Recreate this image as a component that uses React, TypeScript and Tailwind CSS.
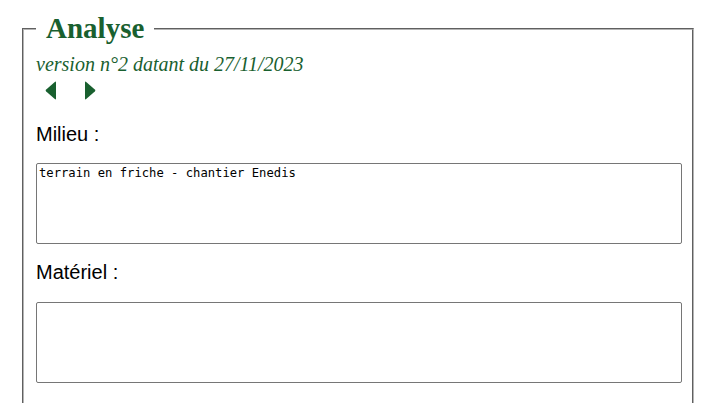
export default function App() {
  return (
    <div className="min-h-screen bg-white pl-[22px] pr-[26px] pt-[12px]">
      <fieldset className="h-[420px] border-2 border-[#b4b4b4] pl-[12px] pr-[10px] pb-[10px] [border-style:groove]">
        <legend className="px-[10px] font-['Liberation_Serif',serif] text-[29px] font-bold leading-[33px] text-[#19602f]">
          Analyse
        </legend>

        <div className="mt-[7px] font-['Liberation_Serif',serif] text-[20px] italic leading-[24px] text-[#19602f]">
          version n°2 datant du 27/11/2023
        </div>

        <div className="mt-[5px] flex items-center gap-[27px] pl-[9px]">
          <svg width="12" height="19" viewBox="0 0 12 19">
            <path d="M11 1.5 L11 17.5 Q11 19 9.8 18 L1.2 10.6 Q0 9.5 1.2 8.4 L9.8 1 Q11 0 11 1.5 Z" fill="#19602f" />
          </svg>
          <svg width="12" height="19" viewBox="0 0 12 19">
            <path d="M1 1.5 L1 17.5 Q1 19 2.2 18 L10.8 10.6 Q12 9.5 10.8 8.4 L2.2 1 Q1 0 1 1.5 Z" fill="#19602f" />
          </svg>
        </div>

        <div className="font-['Liberation_Sans',Arial,sans-serif]">
          <label className="mt-[23px] block text-[20px] leading-[23px] text-black">Milieu :</label>
          <textarea
            className="mt-[17px] block h-[81px] w-full resize-none rounded-[2px] border border-[#767676] p-[2px] font-['DejaVu_Sans_Mono',monospace] text-[12.2px] leading-[15px] text-black"
            defaultValue="terrain en friche - chantier Enedis"
          />

          <label className="mt-[17px] block text-[20px] leading-[23px] text-black">Matériel :</label>
          <textarea
            className="mt-[18px] block h-[81px] w-full resize-none rounded-[2px] border border-[#767676] p-[2px] font-['DejaVu_Sans_Mono',monospace] text-[12.2px] leading-[15px] text-black"
            defaultValue=""
          />
        </div>
      </fieldset>
    </div>
  )
}
